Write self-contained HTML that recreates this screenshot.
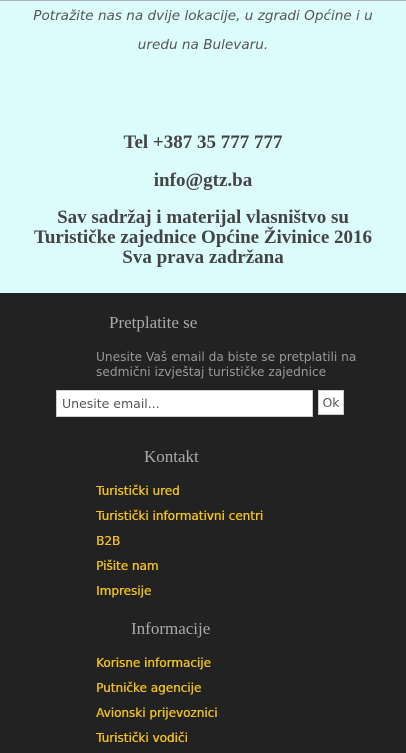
<!DOCTYPE html>
<html><head><meta charset="utf-8"><style>
*{margin:0;padding:0;box-sizing:border-box}
body{width:406px;height:753px;overflow:hidden;background:#222;position:relative;font-family:"DejaVu Sans","Liberation Sans",sans-serif}
.top{position:absolute;left:0;top:0;width:406px;height:293px;background:#dcfcfc;border-top:1px solid #a9b4b4}
.a{position:absolute;left:0;width:406px;text-align:center;white-space:nowrap}
.it{font-style:italic;font-size:13.6px;color:#555}
.b{font-family:"Liberation Serif",serif;font-weight:bold;font-size:19px;color:#444;line-height:20px}
.h{font-family:"Liberation Serif",serif;font-size:17px;color:#aaa}
.l{position:absolute;left:96px;font-size:12px;color:#f0c020;white-space:nowrap;text-shadow:0.4px 0 0 #f0c020}
</style></head><body>
<div class="top"></div>
<div class="a it" style="top:8px">Potražite nas na dvije lokacije, u zgradi Općine i u</div>
<div class="a it" style="top:37px">uredu na Bulevaru.</div>
<div class="a b" style="top:133px">Tel +387 35 777 777</div>
<div class="a b" style="top:171px">info@gtz.ba</div>
<div class="a b" style="top:208px">Sav sadržaj i materijal vlasništvo su<br>Turističke zajednice Općine Živinice 2016<br>Sva prava zadržana</div>
<div class="h" style="position:absolute;left:109px;top:313px">Pretplatite se</div>
<div style="position:absolute;left:96px;top:350px;font-size:12.2px;color:#999;line-height:15px;white-space:nowrap">Unesite Vaš email da biste se pretplatili na<br>sedmični izvještaj turističke zajednice</div>
<div style="position:absolute;left:56px;top:390px;width:257px;height:27px;background:#fff;border:1px solid #ccc;font-size:12.5px;color:#555;padding:5px 5px">Unesite email...</div>
<div style="position:absolute;left:318px;top:390px;width:26px;height:25px;background:#fff;border:1px solid #ccc;font-size:12.5px;color:#555;text-align:center;line-height:23px">Ok</div>
<div class="h" style="position:absolute;left:144px;top:447px">Kontakt</div>
<div class="l" style="top:484px">Turistički ured</div>
<div class="l" style="top:509px">Turistički informativni centri</div>
<div class="l" style="top:534px">B2B</div>
<div class="l" style="top:559px">Pišite nam</div>
<div class="l" style="top:584px">Impresije</div>
<div class="h" style="position:absolute;left:131px;top:619px">Informacije</div>
<div class="l" style="top:656px">Korisne informacije</div>
<div class="l" style="top:681px">Putničke agencije</div>
<div class="l" style="top:706px">Avionski prijevoznici</div>
<div class="l" style="top:731px">Turistički vodiči</div>
</body></html>
